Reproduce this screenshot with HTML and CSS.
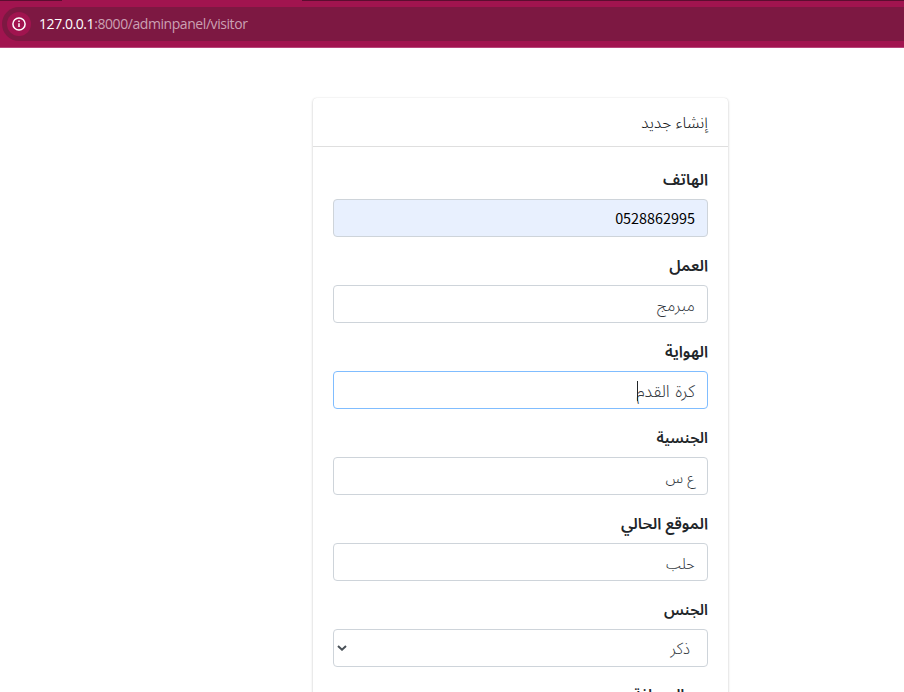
FILE: index.html
```html
<!DOCTYPE html>
<html lang="ar">
<head>
<meta charset="utf-8">
<title>إنشاء جديد</title>
<link rel="stylesheet" href="styles.css">
</head>
<body>
<header class="browser">
  <div class="tabs"><span class="tab-active"></span></div>
  <div class="address">
    <span class="info"><svg width="14" height="14" viewBox="0 0 14 14"><circle cx="7" cy="7" r="6.1" fill="none" stroke="#fff" stroke-width="1.5"/><path d="M7 6.3v3.8M7 3.6v1.5" stroke="#fff" stroke-width="1.5"/></svg></span>
    <span class="url"><b>127.0.0.1</b>:8000/adminpanel/visitor</span>
  </div>
</header>
<main class="card" dir="rtl">
  <div class="card-header">إنشاء جديد</div>
  <form class="card-body">
    <div class="group"><label class="wide">الهاتف</label><div class="field filled"><span>0528862995</span></div></div>
    <div class="group"><label class="wide">العمل</label><div class="field"><span>مبرمج</span></div></div>
    <div class="group"><label class="wide">الهواية</label><div class="field focused"><span>كرة القدم</span><i class="caret"></i></div></div>
    <div class="group"><label>الجنسية</label><div class="field compact"><span>ع س</span></div></div>
    <div class="group"><label class="wide">الموقع الحالي</label><div class="field compact"><span>حلب</span></div></div>
    <div class="group"><label>الجنس</label><div class="field select"><span>ذكر</span><svg width="10" height="6" viewBox="0 0 10 6"><path d="M1 1l4 3.7L9 1" fill="none" stroke="#495057" stroke-width="2"/></svg></div></div>
    <div class="group"><label class="last">عن المسافة</label></div>
  </form>
</main>
</body>
</html>
```

FILE: styles.css
```css
* { box-sizing: border-box; }
body { margin: 0; height: 692px; overflow: hidden; background: #fff; font-family: "Noto Sans", "Noto Sans Arabic", "DejaVu Sans", sans-serif; color: #212529; }
.browser { height: 48px; background: #a1144f; border-bottom: 1px solid #b8457a; }
.tabs { height: 1px; background: #5c0d30; display: flex; }
.tab-active { margin-left: 62px; width: 240px; background: #a1144f; }
.address { margin: 6px 0 0 2px; height: 34px; border-radius: 17px 0 0 17px; background: #7d1842; display: flex; align-items: center; padding-left: 5px; }
.info { width: 24px; height: 24px; border-radius: 50%; background: #a1144f; display: flex; align-items: center; justify-content: center; }
.url { margin-left: 8px; padding-bottom: 1px; font: 14px "Open Sans", sans-serif; letter-spacing: -.43px; color: #cba0b3; }
.url b { font-weight: 400; color: #fff; }
.card { width: 415px; margin: 50px 0 0 313px; border-radius: 4px; background: #fff; box-shadow: 0 0 1px rgba(0,0,0,.125), 0 1px 3px rgba(0,0,0,.2); }
.card-header { height: 49px; border-bottom: 1px solid #dfdfdf; padding: 12px 20px; line-height: 24px; font-size: 16px; font-weight: 350; color: #111418; }
.card-body { padding: 20px; }
.group { margin-bottom: 16px; }
label { display: block; height: 24px; line-height: 24px; margin-bottom: 8px; font-weight: 600; font-size: 15px; }
label.wide { font-size: 15.8px; }
label.last { line-height: 23px; }
.field { display: flex; align-items: center; height: 38px; border: 1px solid #ced4da; border-radius: 4px; padding: 1px 12px 0 12px; font-size: 16px; line-height: 24px; color: #30363c; }
.field span { font-weight: 350; }
.filled { background: #e8f0fe; color: #000; font-family: "Noto Sans CJK SC", sans-serif; font-size: 14.4px; padding-top: 0; }
.filled span { font-weight: 400; }
.focused { border-color: #80bdff; }
.focused span { font-size: 17px; word-spacing: 1px; margin-left: -1px; }
.compact { font-size: 15px; }
.caret { width: 1px; height: 20px; background: #212529; }
.select { justify-content: space-between; padding: 0 17px 0 3px; }
```
